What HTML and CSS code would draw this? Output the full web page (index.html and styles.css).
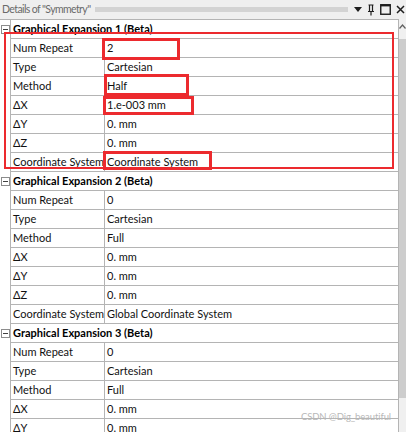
FILE: index.html
```html
<!DOCTYPE html>
<html>
<head>
<meta charset="utf-8">
<link rel="stylesheet" href="styles.css">
</head>
<body>
<div class="panel">
  <div class="titlebar">
    <span class="title">Details of "Symmetry"</span>
    <span class="grip"></span>
    <span class="tools">
      <svg width="8" height="6" viewBox="0 0 8 6"><path d="M0 0H8L4 5Z" fill="#1e1e1e"/></svg>
      <svg width="8" height="12" viewBox="0 0 8 12"><path d="M1.5 1H6.5M2.5 1V7M5.5 1V7M1 7.5H7M4 7.5V11.5" stroke="#1e1e1e" stroke-width="1.2" fill="none"/></svg>
      <svg width="11" height="11" viewBox="0 0 11 11"><rect x="0.75" y="0.75" width="9.5" height="9.5" stroke="#1e1e1e" stroke-width="1.4" fill="none"/><path d="M0.75 1.6H10.25" stroke="#1e1e1e" stroke-width="1.6"/></svg>
      <svg width="9" height="9" viewBox="0 0 9 9"><path d="M1 1L8 8M8 1L1 8" stroke="#1e1e1e" stroke-width="1.5"/></svg>
    </span>
  </div>
  <div class="body">
    <div class="grid">
      <div class="line"><span class="gutter"><span class="toggle"></span></span><div class="head">Graphical Expansion 1 (Beta)</div></div>
      <div class="line"><span class="gutter"></span><div class="row"><span class="k">Num Repeat</span><span class="v">2</span></div></div>
      <div class="line"><span class="gutter"></span><div class="row"><span class="k">Type</span><span class="v">Cartesian</span></div></div>
      <div class="line"><span class="gutter"></span><div class="row"><span class="k">Method</span><span class="v">Half</span></div></div>
      <div class="line"><span class="gutter"></span><div class="row"><span class="k">ΔX</span><span class="v">1.e-003 mm</span></div></div>
      <div class="line"><span class="gutter"></span><div class="row"><span class="k">ΔY</span><span class="v">0. mm</span></div></div>
      <div class="line"><span class="gutter"></span><div class="row"><span class="k">ΔZ</span><span class="v">0. mm</span></div></div>
      <div class="line"><span class="gutter"></span><div class="row"><span class="k">Coordinate System</span><span class="v">Coordinate System</span></div></div>

      <div class="line"><span class="gutter"><span class="toggle"></span></span><div class="head">Graphical Expansion 2 (Beta)</div></div>
      <div class="line"><span class="gutter"></span><div class="row"><span class="k">Num Repeat</span><span class="v">0</span></div></div>
      <div class="line"><span class="gutter"></span><div class="row"><span class="k">Type</span><span class="v">Cartesian</span></div></div>
      <div class="line"><span class="gutter"></span><div class="row"><span class="k">Method</span><span class="v">Full</span></div></div>
      <div class="line"><span class="gutter"></span><div class="row"><span class="k">ΔX</span><span class="v">0. mm</span></div></div>
      <div class="line"><span class="gutter"></span><div class="row"><span class="k">ΔY</span><span class="v">0. mm</span></div></div>
      <div class="line"><span class="gutter"></span><div class="row"><span class="k">ΔZ</span><span class="v">0. mm</span></div></div>
      <div class="line"><span class="gutter"></span><div class="row"><span class="k">Coordinate System</span><span class="v">Global Coordinate System</span></div></div>

      <div class="line"><span class="gutter"><span class="toggle"></span></span><div class="head">Graphical Expansion 3 (Beta)</div></div>
      <div class="line"><span class="gutter"></span><div class="row"><span class="k">Num Repeat</span><span class="v">0</span></div></div>
      <div class="line"><span class="gutter"></span><div class="row"><span class="k">Type</span><span class="v">Cartesian</span></div></div>
      <div class="line"><span class="gutter"></span><div class="row"><span class="k">Method</span><span class="v">Full</span></div></div>
      <div class="line"><span class="gutter"></span><div class="row"><span class="k">ΔX</span><span class="v">0. mm</span></div></div>
      <div class="line"><span class="gutter"></span><div class="row"><span class="k">ΔY</span><span class="v">0. mm</span></div></div>
    </div>
    <div class="scrollbar">
      <svg class="arrow" width="7" height="5" viewBox="0 0 7 5"><path d="M0.5 4.5L3.5 1L6.5 4.5" stroke="#606060" stroke-width="1.2" fill="none"/></svg>
      <div class="thumb"></div>
    </div>
  </div>

  <div class="mark mark-all"></div>
  <div class="mark mark-repeat"></div>
  <div class="mark mark-method"></div>
  <div class="mark mark-dx"></div>
  <div class="mark mark-cs"></div>
  <div class="watermark">CSDN @Dig_beautiful</div>
</div>
</body>
</html>
```

FILE: styles.css
```css
html, body {
  margin: 0;
  padding: 0;
  background: #ffffff;
}
body {
  width: 406px;
  height: 432px;
  overflow: hidden;
  font-family: Lato, "Open Sans", sans-serif;
  font-size: 11px;
  color: #111111;
}
.panel {
  position: relative;
  width: 406px;
  height: 432px;
  overflow: hidden;
}
.titlebar {
  height: 19px;
  background: #efefef;
  display: flex;
  align-items: center;
}
.title {
  padding-left: 2px;
  font-size: 10.5px;
  letter-spacing: -0.6px;
  color: #6a6a6a;
  white-space: nowrap;
  line-height: 19px;
}
.grip {
  flex: 1;
  height: 5px;
  margin: -1px 6px 0 5px;
  background-image: radial-gradient(circle, #c4c4c4 0.6px, transparent 0.9px);
  background-size: 2px 2px;
  align-self: center;
}
.tools {
  display: flex;
  align-items: center;
  gap: 5px;
  padding-right: 1px;
}
.body {
  display: flex;
  height: 413px;
}
.grid {
  width: 399px;
  border-top: 1px solid #b4b4b4;
}
.line {
  display: flex;
  height: 19px;
}
.gutter {
  width: 10px;
  flex: none;
  display: flex;
  align-items: center;
}
.toggle {
  position: relative;
  width: 7px;
  height: 7px;
  margin-left: 1px;
  border: 1px solid #8c8c8c;
  background: #fff;
}
.toggle::after {
  content: "";
  position: absolute;
  left: 1px;
  right: 1px;
  top: 3px;
  height: 1px;
  background: #404040;
}
.head, .row {
  flex: 1;
  border-left: 1px solid #b4b4b4;
  border-right: 1px solid #b4b4b4;
  border-bottom: 1px solid #b4b4b4;
  line-height: 18px;
  white-space: nowrap;
  overflow: hidden;
}
.head {
  font-weight: 700;
  padding-left: 2px;
  color: #000;
}
.row {
  display: grid;
  grid-template-columns: 94px 1fr;
}
.k {
  padding-left: 2px;
  border-right: 1px solid #b4b4b4;
  overflow: hidden;
}
.v {
  padding-left: 2px;
}
.scrollbar {
  width: 7px;
  background: #f0f0f0;
  display: flex;
  flex-direction: column;
  align-items: center;
}
.arrow {
  margin-top: 5px;
}
.thumb {
  margin-top: 10px;
  width: 7px;
  height: 359px;
  background: #cdcdcd;
}
.mark {
  position: absolute;
  border: 3px solid #ec2a2e;
  box-sizing: border-box;
}
.mark-all { left: 4px; top: 32px; width: 390px; height: 137px; border-width: 2.5px; }
.mark-repeat { left: 102px; top: 38px; width: 78px; height: 22px; }
.mark-method { left: 104px; top: 74px; width: 85px; height: 22px; }
.mark-dx { left: 103px; top: 96px; width: 91px; height: 19px; }
.mark-cs { left: 103px; top: 151px; width: 109px; height: 19px; }
.watermark {
  position: absolute;
  right: 15px;
  top: 411px;
  font-size: 9.5px;
  letter-spacing: -0.1px;
  line-height: 12px;
  color: #b8b8b8;
  white-space: nowrap;
}
```
